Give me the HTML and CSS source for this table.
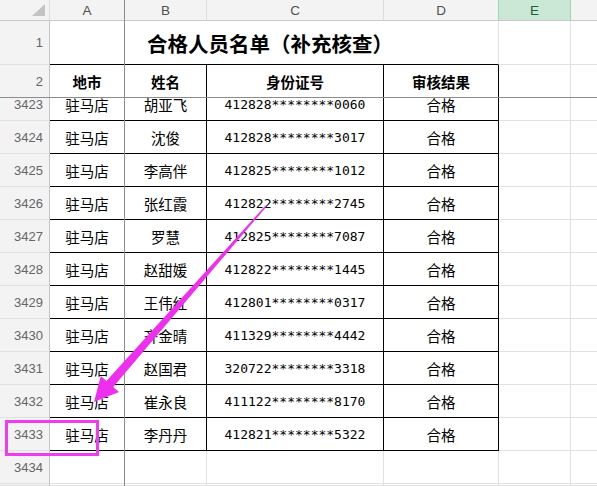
FILE: index.html
```html
<!DOCTYPE html>
<html lang="zh-CN">
<head>
<meta charset="utf-8">
<title>合格人员名单</title>
<link rel="stylesheet" href="styles.css">
</head>
<body>
<div class="sheet">
  <!-- column headers -->
  <div class="ch corner"><svg width="14" height="13" viewBox="0 0 14 13"><polygon points="13,0 13,12 0,12" fill="#c3c3c3"/></svg></div>
  <div class="ch">A</div>
  <div class="ch">B</div>
  <div class="ch">C</div>
  <div class="ch ch-d">D</div>
  <div class="ch sel">E</div>
  <div class="ch end"></div>

  <!-- row 1 -->
  <div class="rh">1</div>
  <div class="title">合格人员名单（补充核查）</div>
  <div></div>
  <div class="end"></div>

  <!-- row 2 -->
  <div class="rh">2</div>
  <div class="t hd">地市</div>
  <div class="t hd">姓名</div>
  <div class="t hd">身份证号</div>
  <div class="t hd">审核结果</div>
  <div></div>
  <div class="end"></div>

  <!-- row 3423 (partially scrolled) -->
  <div class="rh part"><span class="shift">3423</span></div>
  <div class="t part"><span class="shift">驻马店</span></div>
  <div class="t part"><span class="shift">胡亚飞</span></div>
  <div class="t part num"><span class="shift">412828********0060</span></div>
  <div class="t part"><span class="shift">合格</span></div>
  <div></div>
  <div class="end"></div>

  <div class="rh">3424</div><div class="t">驻马店</div><div class="t">沈俊</div><div class="t num">412828********3017</div><div class="t">合格</div><div></div><div class="end"></div>
  <div class="rh">3425</div><div class="t">驻马店</div><div class="t">李高伴</div><div class="t num">412825********1012</div><div class="t">合格</div><div></div><div class="end"></div>
  <div class="rh">3426</div><div class="t">驻马店</div><div class="t">张红霞</div><div class="t num">412822********2745</div><div class="t">合格</div><div></div><div class="end"></div>
  <div class="rh">3427</div><div class="t">驻马店</div><div class="t">罗慧</div><div class="t num">412825********7087</div><div class="t">合格</div><div></div><div class="end"></div>
  <div class="rh">3428</div><div class="t">驻马店</div><div class="t">赵甜媛</div><div class="t num">412822********1445</div><div class="t">合格</div><div></div><div class="end"></div>
  <div class="rh">3429</div><div class="t">驻马店</div><div class="t">王伟红</div><div class="t num">412801********0317</div><div class="t">合格</div><div></div><div class="end"></div>
  <div class="rh">3430</div><div class="t">驻马店</div><div class="t">齐金晴</div><div class="t num">411329********4442</div><div class="t">合格</div><div></div><div class="end"></div>
  <div class="rh">3431</div><div class="t">驻马店</div><div class="t">赵国君</div><div class="t num">320722********3318</div><div class="t">合格</div><div></div><div class="end"></div>
  <div class="rh">3432</div><div class="t">驻马店</div><div class="t">崔永良</div><div class="t num">411122********8170</div><div class="t">合格</div><div></div><div class="end"></div>
  <div class="rh">3433</div><div class="t">驻马店</div><div class="t">李丹丹</div><div class="t num">412821********5322</div><div class="t">合格</div><div></div><div class="end"></div>

  <div class="rh">3434</div><div></div><div></div><div></div><div></div><div></div><div class="end"></div>
  <div class="rh"></div><div></div><div></div><div></div><div></div><div></div><div class="end"></div>
</div>

<div class="freeze-v"></div>
<div class="freeze-h"></div>

<svg class="arrow" width="597" height="486" viewBox="0 0 597 486">
  <polygon fill="#ee2fee" points="266.5,206.4 113.2,387.0 119.0,392.0 94,402 100.8,375.9 106.4,380.9 265.5,205.6"/>
</svg>
<div class="mark"></div>
</body>
</html>
```

FILE: styles.css
```css
html, body {
  margin: 0;
  padding: 0;
}
body {
  width: 597px;
  height: 486px;
  overflow: hidden;
  background: #ffffff;
  position: relative;
  font-family: "Noto Sans CJK SC", "Liberation Sans", sans-serif;
}
.sheet {
  display: grid;
  grid-template-columns: 50px 75px 82px 177px 115px 72px 26px;
  grid-template-rows: 21px 44px 33px 23px repeat(11, 33px) 2px;
  height: 486px;
}
.sheet > div {
  box-sizing: border-box;
  border-right: 1px solid #e1e1e1;
  border-bottom: 1px solid #e1e1e1;
  display: flex;
  align-items: center;
  justify-content: center;
  overflow: hidden;
  font-size: 14.5px;
  color: #000;
  white-space: nowrap;
}
.sheet > div.end {
  border-right: none;
}
.ch {
  background: #f3f3f3;
  border-bottom-color: #c9c9c9 !important;
  border-right-color: #dcdcdc !important;
  font-family: "Liberation Sans", sans-serif;
  font-size: 13.5px !important;
  color: #505050 !important;
}
.corner {
  align-items: flex-end !important;
  justify-content: flex-end !important;
  padding: 0 3px 3px 0;
}
.corner svg {
  display: block;
}
.ch.ch-d {
  border-right-color: #9fd6b5 !important;
}
.ch.sel {
  background: #cbe8d6;
  color: #17603a !important;
  border-right-color: #9fd6b5 !important;
}
.rh {
  background: #f3f3f3;
  border-right-color: #c4c4c4 !important;
  border-bottom-color: #e0e0e0 !important;
  justify-content: flex-end !important;
  padding-right: 6px;
  font-family: "Liberation Sans", sans-serif;
  font-size: 13px !important;
  color: #656565 !important;
}
.title {
  grid-column: span 4;
  font-size: 20.5px !important;
  font-weight: bold;
  border-bottom-color: #000 !important;
  padding-right: 8px;
}
.t {
  border-right-color: #000 !important;
  border-bottom-color: #000 !important;
}
.hd {
  font-weight: bold;
}
.num {
  font-family: "DejaVu Sans Mono", "Liberation Mono", monospace;
  font-size: 13px !important;
}
.part {
  align-items: flex-start !important;
}
.shift {
  display: flex;
  align-items: center;
  height: 33px;
  margin-top: -10px;
}
.freeze-v {
  position: absolute;
  left: 124px;
  top: 0;
  width: 1px;
  height: 486px;
  background: #8c8c8c;
}
.freeze-h {
  position: absolute;
  left: 0;
  top: 97px;
  width: 597px;
  height: 1px;
  background: #8c8c8c;
}
.arrow {
  position: absolute;
  left: 0;
  top: 0;
}
.mark {
  position: absolute;
  left: 5px;
  top: 420px;
  width: 94px;
  height: 36px;
  box-sizing: border-box;
  border: 3px solid #f03cf0;
}
```
